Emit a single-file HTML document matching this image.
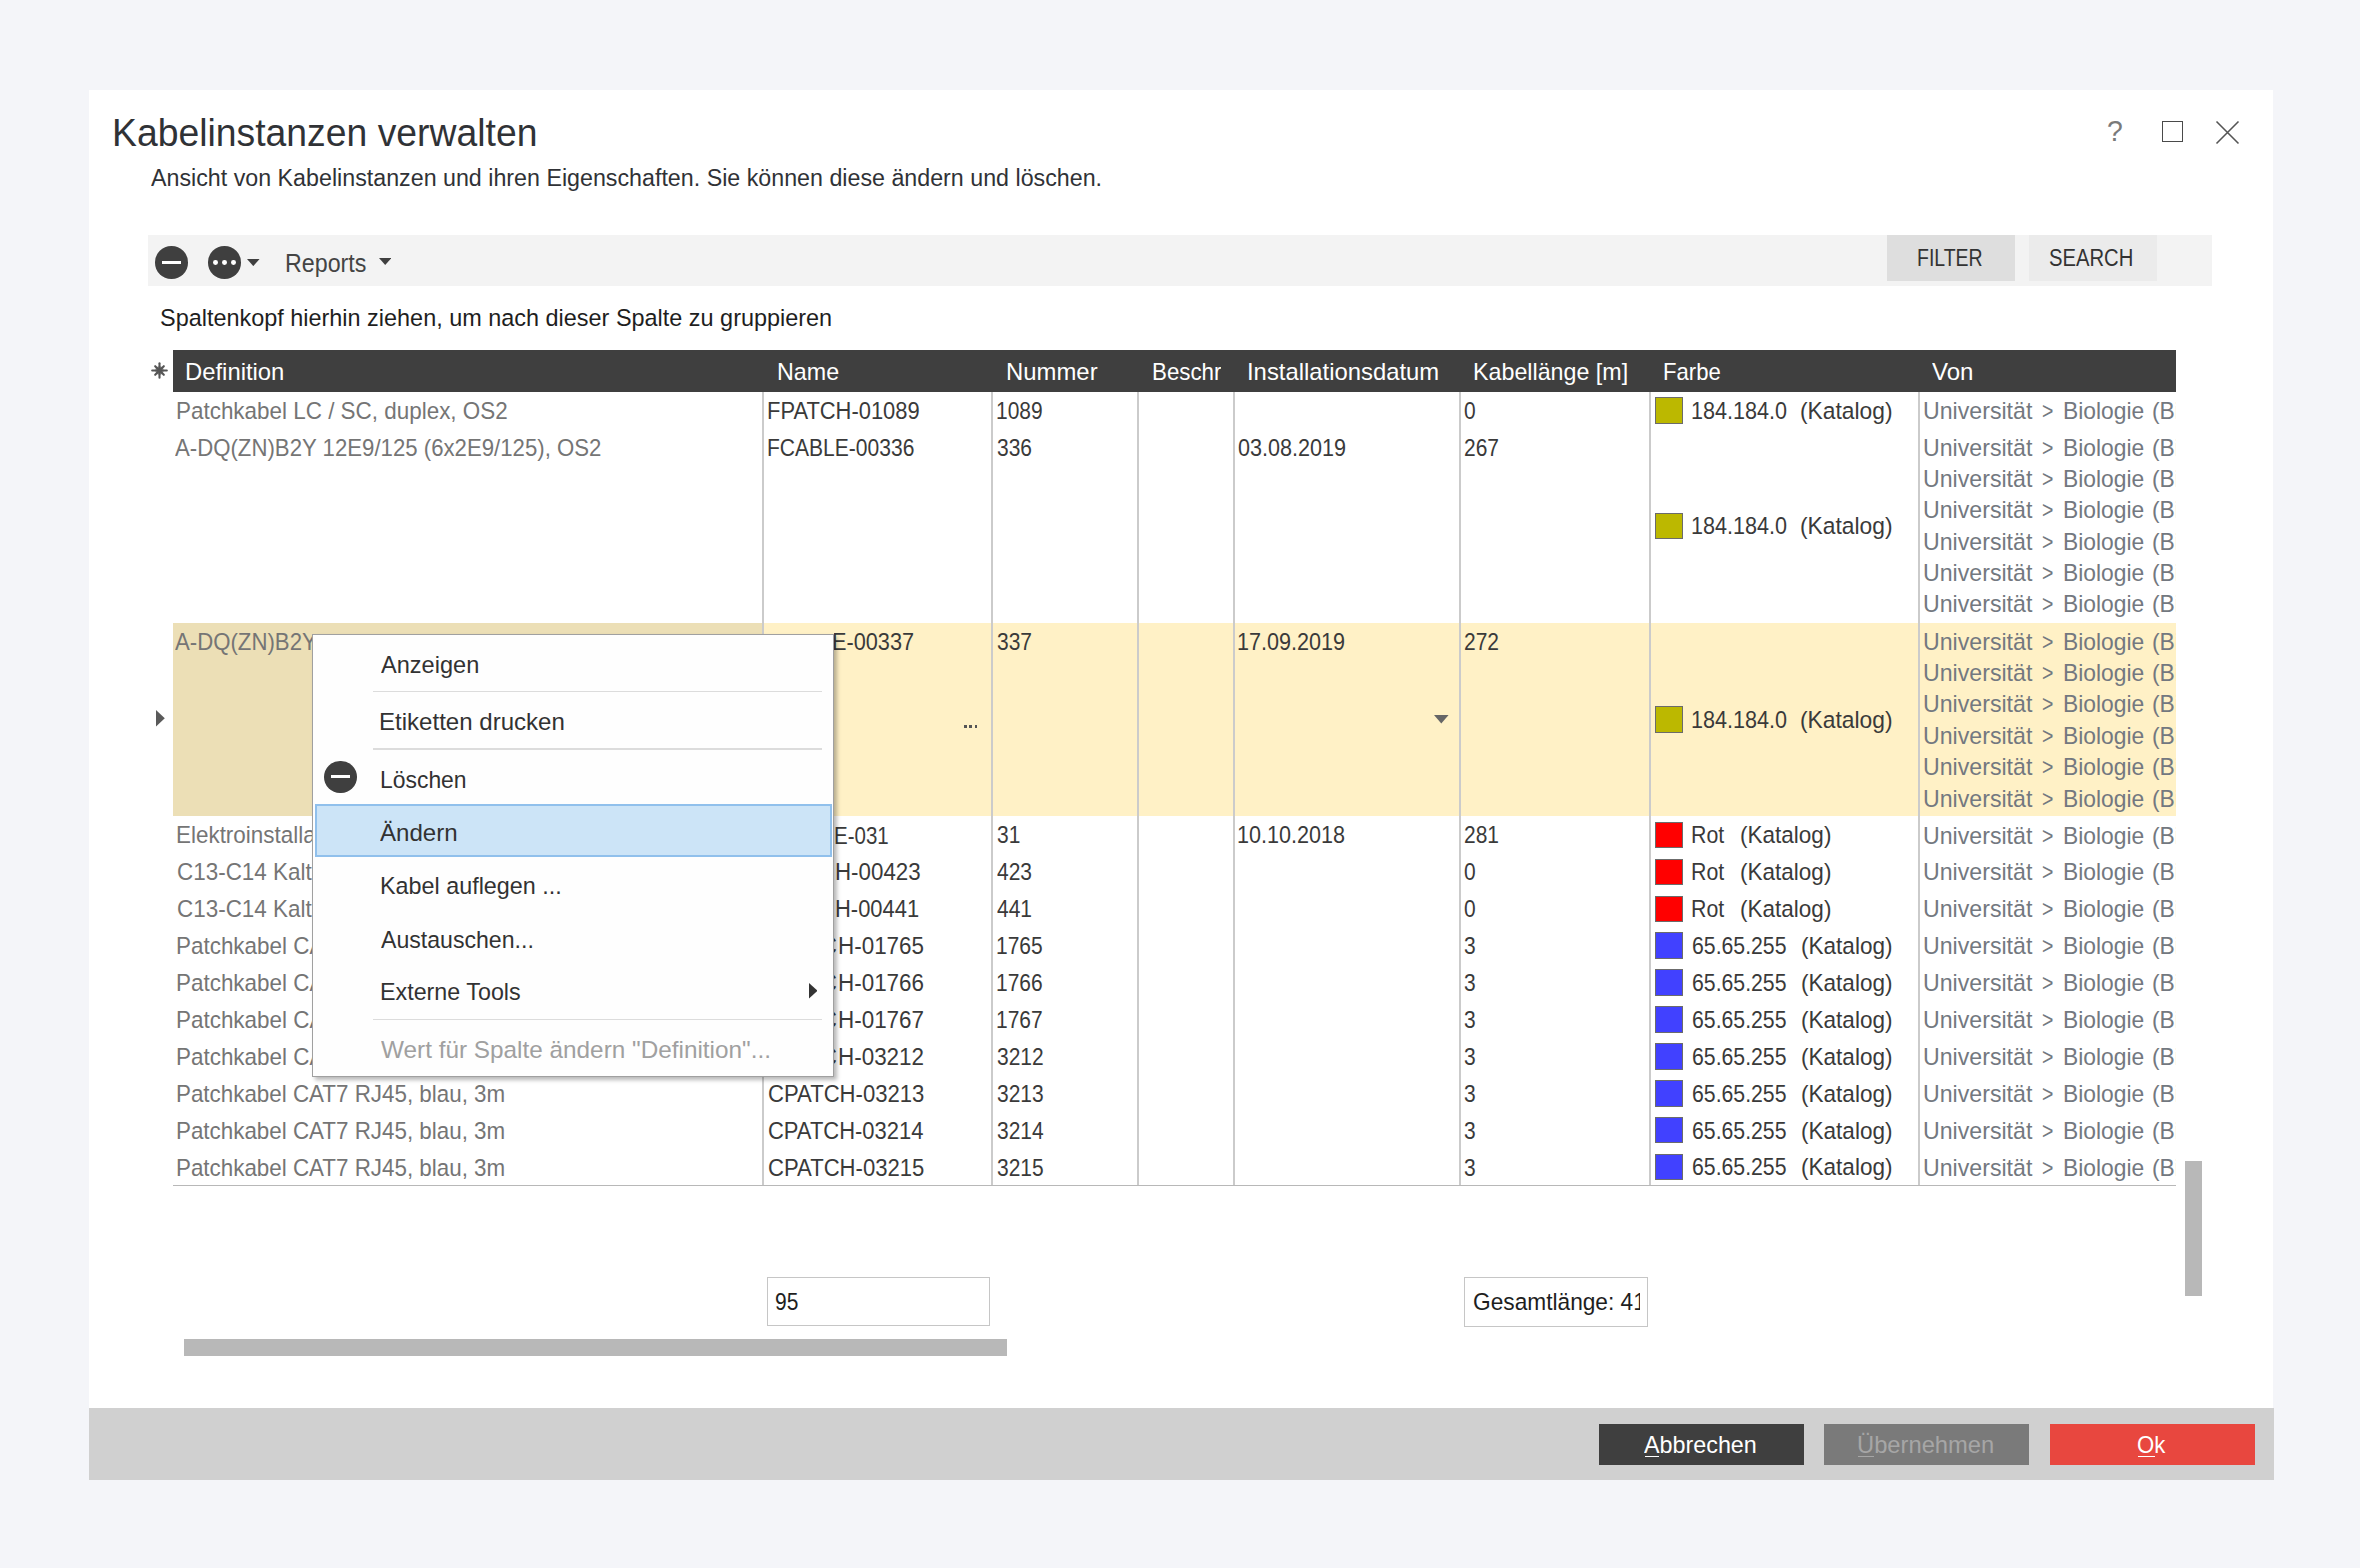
<!DOCTYPE html>
<html><head><meta charset="utf-8"><title>Kabelinstanzen verwalten</title>
<style>
html,body{margin:0;padding:0;}
body{width:2360px;height:1568px;background:#f4f5f9;position:relative;overflow:hidden;font-family:"Liberation Sans",sans-serif;}
.t{position:absolute;white-space:pre;line-height:1;transform-origin:0 0;}
.r{position:absolute;}
</style></head><body>
<div class="r" style="left:89px;top:90px;width:2184px;height:1318px;background:#ffffff;"></div>
<div class="r" style="left:89px;top:1407.5px;width:2184.5px;height:72px;background:#d0d0d0;"></div>
<div class="t" style="left:112.09px;top:113px;font-size:39.20px;color:#303236;transform:scaleX(0.9526);">Kabelinstanzen verwalten</div>
<div class="t" style="left:151.00px;top:166px;font-size:24.70px;color:#303236;transform:scaleX(0.9415);">Ansicht von Kabelinstanzen und ihren Eigenschaften. Sie können diese ändern und löschen.</div>
<div class="t" style="left:2107.02px;top:117px;font-size:29.00px;color:#7a7a7a;transform:scaleX(0.9800);">?</div>
<div class="r" style="left:2161.5px;top:120.5px;width:21px;height:21px;background:transparent;border:1.6px solid #4a4a4a;box-sizing:border-box;"></div>
<svg class="r" style="left:2214px;top:119px" width="28" height="28" viewBox="0 0 28 28"><path d="M2.5 2.5 L24.5 24.5 M24.5 2.5 L2.5 24.5" stroke="#555" stroke-width="1.6" fill="none"/></svg>
<div class="r" style="left:148px;top:235px;width:2064px;height:50.5px;background:#f3f3f3;"></div>
<div class="r" style="left:1887px;top:235px;width:128px;height:46px;background:#dedede;"></div>
<div class="r" style="left:2029px;top:235px;width:128px;height:46px;background:#ebebeb;"></div>
<div class="t" style="left:1917.19px;top:246px;font-size:24.10px;color:#333;transform:scaleX(0.8088);">FILTER</div>
<div class="t" style="left:2049.46px;top:246px;font-size:24.10px;color:#333;transform:scaleX(0.8394);">SEARCH</div>
<div class="r" style="left:155.2px;top:246.1px;width:32.6px;height:32.6px;border-radius:50%;background:#3f3f3f"></div>
<div class="r" style="left:162.2px;top:260.8px;width:18.5px;height:3.2px;background:#fff"></div>
<div class="r" style="left:208.2px;top:246.1px;width:32.6px;height:32.6px;border-radius:50%;background:#3f3f3f"></div>
<div class="r" style="left:213.0px;top:260.0px;width:4.8px;height:4.8px;border-radius:50%;background:#fff"></div>
<div class="r" style="left:222.1px;top:260.0px;width:4.8px;height:4.8px;border-radius:50%;background:#fff"></div>
<div class="r" style="left:231.0px;top:260.0px;width:4.8px;height:4.8px;border-radius:50%;background:#fff"></div>
<svg class="r" style="left:247.4px;top:259.4px" width="12.6" height="7.1" viewBox="0 0 12.6 7.1"><path d="M0 0 L12.6 0 L6.3 7.1 Z" fill="#3f3f3f"/></svg>
<div class="t" style="left:285.20px;top:251px;font-size:25.90px;color:#444;transform:scaleX(0.8978);">Reports</div>
<svg class="r" style="left:378.6px;top:258px" width="12.5" height="6.9" viewBox="0 0 12.5 6.9"><path d="M0 0 L12.5 0 L6.2 6.9 Z" fill="#3f3f3f"/></svg>
<div class="t" style="left:160.03px;top:306px;font-size:24.10px;color:#1e1e1e;transform:scaleX(0.9725);">Spaltenkopf hierhin ziehen, um nach dieser Spalte zu gruppieren</div>
<div class="r" style="left:173px;top:350px;width:2003.3000000000002px;height:42px;background:#3f3f3f;"></div>
<svg class="r" style="left:151px;top:362px" width="17" height="17" viewBox="0 0 17 17"><circle cx="8.5" cy="8.5" r="4.2" fill="#8f8f8f"/><g stroke="#555" stroke-width="2.1" stroke-linecap="round"><path d="M8.5 1.2 V15.8"/><path d="M1.2 8.5 H15.8"/><path d="M4.2 4.2 L12.8 12.8"/><path d="M12.8 4.2 L4.2 12.8"/></g></svg>
<div class="t" style="left:185.21px;top:360px;font-size:24.00px;color:#ffffff;transform:scaleX(0.9929);">Definition</div>
<div class="t" style="left:776.53px;top:360px;font-size:24.00px;color:#ffffff;transform:scaleX(0.9698);">Name</div>
<div class="t" style="left:1005.80px;top:360px;font-size:24.00px;color:#ffffff;transform:scaleX(0.9956);">Nummer</div>
<div class="r" style="left:1140px;top:350px;width:80.5px;height:42px;overflow:hidden">
<div class="t" style="left:12.27px;top:10px;font-size:24.00px;color:#ffffff;transform:scaleX(0.9300);">Beschreibung</div>
</div>
<div class="t" style="left:1246.81px;top:360px;font-size:24.00px;color:#ffffff;transform:scaleX(0.9932);">Installationsdatum</div>
<div class="t" style="left:1473.23px;top:360px;font-size:24.00px;color:#ffffff;transform:scaleX(0.9692);">Kabellänge [m]</div>
<div class="t" style="left:1662.78px;top:360px;font-size:24.00px;color:#ffffff;transform:scaleX(0.9213);">Farbe</div>
<div class="t" style="left:1932.40px;top:360px;font-size:24.00px;color:#ffffff;transform:scaleX(1.0024);">Von</div>
<div class="r" style="left:173px;top:622.9px;width:2003.3000000000002px;height:193.6px;background:#fff1c6;"></div>
<div class="r" style="left:173px;top:622.9px;width:590px;height:193.6px;background:#ecdfb6;"></div>
<div class="r" style="left:762px;top:392px;width:1.6px;height:793.5000000000002px;background:#cbcbcb;"></div>
<div class="r" style="left:991px;top:392px;width:1.6px;height:793.5000000000002px;background:#cbcbcb;"></div>
<div class="r" style="left:1137px;top:392px;width:1.6px;height:793.5000000000002px;background:#cbcbcb;"></div>
<div class="r" style="left:1233px;top:392px;width:1.6px;height:793.5000000000002px;background:#cbcbcb;"></div>
<div class="r" style="left:1459px;top:392px;width:1.6px;height:793.5000000000002px;background:#cbcbcb;"></div>
<div class="r" style="left:1649px;top:392px;width:1.6px;height:793.5000000000002px;background:#cbcbcb;"></div>
<div class="r" style="left:1918px;top:392px;width:1.6px;height:793.5000000000002px;background:#cbcbcb;"></div>
<div class="r" style="left:173px;top:1185.0000000000002px;width:2003.3000000000002px;height:1.4px;background:#b8b8b8;"></div>
<div class="t" style="left:176.34px;top:400px;font-size:23.25px;color:#757575;transform:scaleX(0.9649);">Patchkabel LC / SC, duplex, OS2</div>
<div class="t" style="left:766.86px;top:400px;font-size:23.25px;color:#3a3a3a;transform:scaleX(0.9429);">FPATCH-01089</div>
<div class="t" style="left:995.90px;top:400px;font-size:23.25px;color:#3a3a3a;transform:scaleX(0.9020);">1089</div>
<div class="t" style="left:1464.40px;top:400px;font-size:23.25px;color:#3a3a3a;transform:scaleX(0.9020);">0</div>
<div class="r" style="left:1655px;top:397.3px;width:28.3px;height:26.6px;background:#bcb800;border:1.4px solid #6b6b6b;box-sizing:border-box;"></div>
<div class="t" style="left:1691.07px;top:400px;font-size:23.25px;color:#3a3a3a;transform:scaleX(0.9284);">184.184.0</div>
<div class="t" style="left:1800.42px;top:400px;font-size:23.25px;color:#3a3a3a;transform:scaleX(0.9817);">(Katalog)</div>
<div class="r" style="left:1920px;top:392.0px;width:255.5px;height:37.3px;overflow:hidden">
<div class="t" style="left:3.00px;top:8px;font-size:23.25px;color:#737880;transform:scaleX(0.9954);">Universität</div>
<div class="t" style="left:122.00px;top:8px;font-size:23.25px;color:#737880;transform:scaleX(0.8385);">&gt;</div>
<div class="t" style="left:143.42px;top:8px;font-size:23.25px;color:#737880;transform:scaleX(0.9829);">Biologie</div>
<div class="t" style="left:232.22px;top:8px;font-size:23.25px;color:#737880;transform:scaleX(0.9817);">(Bio-Zentrum)</div>
</div>
<div class="t" style="left:175.30px;top:437px;font-size:23.25px;color:#757575;transform:scaleX(0.9545);">A-DQ(ZN)B2Y 12E9/125 (6x2E9/125), OS2</div>
<div class="t" style="left:766.90px;top:437px;font-size:23.25px;color:#3a3a3a;transform:scaleX(0.9049);">FCABLE-00336</div>
<div class="t" style="left:996.80px;top:437px;font-size:23.25px;color:#3a3a3a;transform:scaleX(0.9020);">336</div>
<div class="t" style="left:1237.80px;top:437px;font-size:23.25px;color:#3a3a3a;transform:scaleX(0.9284);">03.08.2019</div>
<div class="t" style="left:1464.40px;top:437px;font-size:23.25px;color:#3a3a3a;transform:scaleX(0.9020);">267</div>
<div class="r" style="left:1655px;top:512.8px;width:28.3px;height:26.6px;background:#bcb800;border:1.4px solid #6b6b6b;box-sizing:border-box;"></div>
<div class="t" style="left:1691.07px;top:515px;font-size:23.25px;color:#3a3a3a;transform:scaleX(0.9284);">184.184.0</div>
<div class="t" style="left:1800.42px;top:515px;font-size:23.25px;color:#3a3a3a;transform:scaleX(0.9817);">(Katalog)</div>
<div class="r" style="left:1920px;top:429.3px;width:255.5px;height:193.6px;overflow:hidden">
<div class="t" style="left:3.00px;top:8px;font-size:23.25px;color:#737880;transform:scaleX(0.9954);">Universität</div>
<div class="t" style="left:122.00px;top:8px;font-size:23.25px;color:#737880;transform:scaleX(0.8385);">&gt;</div>
<div class="t" style="left:143.42px;top:8px;font-size:23.25px;color:#737880;transform:scaleX(0.9829);">Biologie</div>
<div class="t" style="left:232.22px;top:8px;font-size:23.25px;color:#737880;transform:scaleX(0.9817);">(Bio-Zentrum)</div>
<div class="t" style="left:3.00px;top:39px;font-size:23.25px;color:#737880;transform:scaleX(0.9954);">Universität</div>
<div class="t" style="left:122.00px;top:39px;font-size:23.25px;color:#737880;transform:scaleX(0.8385);">&gt;</div>
<div class="t" style="left:143.42px;top:39px;font-size:23.25px;color:#737880;transform:scaleX(0.9829);">Biologie</div>
<div class="t" style="left:232.22px;top:39px;font-size:23.25px;color:#737880;transform:scaleX(0.9817);">(Bio-Zentrum)</div>
<div class="t" style="left:3.00px;top:70px;font-size:23.25px;color:#737880;transform:scaleX(0.9954);">Universität</div>
<div class="t" style="left:122.00px;top:70px;font-size:23.25px;color:#737880;transform:scaleX(0.8385);">&gt;</div>
<div class="t" style="left:143.42px;top:70px;font-size:23.25px;color:#737880;transform:scaleX(0.9829);">Biologie</div>
<div class="t" style="left:232.22px;top:70px;font-size:23.25px;color:#737880;transform:scaleX(0.9817);">(Bio-Zentrum)</div>
<div class="t" style="left:3.00px;top:102px;font-size:23.25px;color:#737880;transform:scaleX(0.9954);">Universität</div>
<div class="t" style="left:122.00px;top:102px;font-size:23.25px;color:#737880;transform:scaleX(0.8385);">&gt;</div>
<div class="t" style="left:143.42px;top:102px;font-size:23.25px;color:#737880;transform:scaleX(0.9829);">Biologie</div>
<div class="t" style="left:232.22px;top:102px;font-size:23.25px;color:#737880;transform:scaleX(0.9817);">(Bio-Zentrum)</div>
<div class="t" style="left:3.00px;top:133px;font-size:23.25px;color:#737880;transform:scaleX(0.9954);">Universität</div>
<div class="t" style="left:122.00px;top:133px;font-size:23.25px;color:#737880;transform:scaleX(0.8385);">&gt;</div>
<div class="t" style="left:143.42px;top:133px;font-size:23.25px;color:#737880;transform:scaleX(0.9829);">Biologie</div>
<div class="t" style="left:232.22px;top:133px;font-size:23.25px;color:#737880;transform:scaleX(0.9817);">(Bio-Zentrum)</div>
<div class="t" style="left:3.00px;top:164px;font-size:23.25px;color:#737880;transform:scaleX(0.9954);">Universität</div>
<div class="t" style="left:122.00px;top:164px;font-size:23.25px;color:#737880;transform:scaleX(0.8385);">&gt;</div>
<div class="t" style="left:143.42px;top:164px;font-size:23.25px;color:#737880;transform:scaleX(0.9829);">Biologie</div>
<div class="t" style="left:232.22px;top:164px;font-size:23.25px;color:#737880;transform:scaleX(0.9817);">(Bio-Zentrum)</div>
</div>
<div class="r" style="left:173px;top:622.9px;width:139px;height:193.6px;overflow:hidden">
<div class="t" style="left:2.30px;top:8px;font-size:23.25px;color:#757575;transform:scaleX(0.9545);">A-DQ(ZN)B2Y 12E9/125 (6x2E9/125), OS2</div>
</div>
<div class="r" style="left:834px;top:622.9px;width:156px;height:193.6px;overflow:hidden">
<div class="t" style="left:-2.13px;top:8px;font-size:23.25px;color:#3a3a3a;transform:scaleX(0.9333);">E-00337</div>
</div>
<div class="t" style="left:996.80px;top:631px;font-size:23.25px;color:#3a3a3a;transform:scaleX(0.9020);">337</div>
<div class="t" style="left:1236.87px;top:631px;font-size:23.25px;color:#3a3a3a;transform:scaleX(0.9284);">17.09.2019</div>
<div class="t" style="left:1464.40px;top:631px;font-size:23.25px;color:#3a3a3a;transform:scaleX(0.9020);">272</div>
<div class="r" style="left:1655px;top:706.4px;width:28.3px;height:26.6px;background:#bcb800;border:1.4px solid #6b6b6b;box-sizing:border-box;"></div>
<div class="t" style="left:1691.07px;top:709px;font-size:23.25px;color:#3a3a3a;transform:scaleX(0.9284);">184.184.0</div>
<div class="t" style="left:1800.42px;top:709px;font-size:23.25px;color:#3a3a3a;transform:scaleX(0.9817);">(Katalog)</div>
<div class="r" style="left:1920px;top:622.9px;width:255.5px;height:193.6px;overflow:hidden">
<div class="t" style="left:3.00px;top:8px;font-size:23.25px;color:#737880;transform:scaleX(0.9954);">Universität</div>
<div class="t" style="left:122.00px;top:8px;font-size:23.25px;color:#737880;transform:scaleX(0.8385);">&gt;</div>
<div class="t" style="left:143.42px;top:8px;font-size:23.25px;color:#737880;transform:scaleX(0.9829);">Biologie</div>
<div class="t" style="left:232.22px;top:8px;font-size:23.25px;color:#737880;transform:scaleX(0.9817);">(Bio-Zentrum)</div>
<div class="t" style="left:3.00px;top:39px;font-size:23.25px;color:#737880;transform:scaleX(0.9954);">Universität</div>
<div class="t" style="left:122.00px;top:39px;font-size:23.25px;color:#737880;transform:scaleX(0.8385);">&gt;</div>
<div class="t" style="left:143.42px;top:39px;font-size:23.25px;color:#737880;transform:scaleX(0.9829);">Biologie</div>
<div class="t" style="left:232.22px;top:39px;font-size:23.25px;color:#737880;transform:scaleX(0.9817);">(Bio-Zentrum)</div>
<div class="t" style="left:3.00px;top:70px;font-size:23.25px;color:#737880;transform:scaleX(0.9954);">Universität</div>
<div class="t" style="left:122.00px;top:70px;font-size:23.25px;color:#737880;transform:scaleX(0.8385);">&gt;</div>
<div class="t" style="left:143.42px;top:70px;font-size:23.25px;color:#737880;transform:scaleX(0.9829);">Biologie</div>
<div class="t" style="left:232.22px;top:70px;font-size:23.25px;color:#737880;transform:scaleX(0.9817);">(Bio-Zentrum)</div>
<div class="t" style="left:3.00px;top:102px;font-size:23.25px;color:#737880;transform:scaleX(0.9954);">Universität</div>
<div class="t" style="left:122.00px;top:102px;font-size:23.25px;color:#737880;transform:scaleX(0.8385);">&gt;</div>
<div class="t" style="left:143.42px;top:102px;font-size:23.25px;color:#737880;transform:scaleX(0.9829);">Biologie</div>
<div class="t" style="left:232.22px;top:102px;font-size:23.25px;color:#737880;transform:scaleX(0.9817);">(Bio-Zentrum)</div>
<div class="t" style="left:3.00px;top:133px;font-size:23.25px;color:#737880;transform:scaleX(0.9954);">Universität</div>
<div class="t" style="left:122.00px;top:133px;font-size:23.25px;color:#737880;transform:scaleX(0.8385);">&gt;</div>
<div class="t" style="left:143.42px;top:133px;font-size:23.25px;color:#737880;transform:scaleX(0.9829);">Biologie</div>
<div class="t" style="left:232.22px;top:133px;font-size:23.25px;color:#737880;transform:scaleX(0.9817);">(Bio-Zentrum)</div>
<div class="t" style="left:3.00px;top:165px;font-size:23.25px;color:#737880;transform:scaleX(0.9954);">Universität</div>
<div class="t" style="left:122.00px;top:165px;font-size:23.25px;color:#737880;transform:scaleX(0.8385);">&gt;</div>
<div class="t" style="left:143.42px;top:165px;font-size:23.25px;color:#737880;transform:scaleX(0.9829);">Biologie</div>
<div class="t" style="left:232.22px;top:165px;font-size:23.25px;color:#737880;transform:scaleX(0.9817);">(Bio-Zentrum)</div>
</div>
<div class="t" style="left:176.34px;top:824px;font-size:23.25px;color:#757575;transform:scaleX(0.9649);">Elektroinstallationskabel NYM-J 3x1,5</div>
<div class="r" style="left:834px;top:816.5px;width:156px;height:36.9px;overflow:hidden">
<div class="t" style="left:0.32px;top:8px;font-size:23.25px;color:#3a3a3a;transform:scaleX(0.8820);">E-031</div>
</div>
<div class="t" style="left:996.80px;top:824px;font-size:23.25px;color:#3a3a3a;transform:scaleX(0.9020);">31</div>
<div class="t" style="left:1236.87px;top:824px;font-size:23.25px;color:#3a3a3a;transform:scaleX(0.9284);">10.10.2018</div>
<div class="t" style="left:1464.40px;top:824px;font-size:23.25px;color:#3a3a3a;transform:scaleX(0.9020);">281</div>
<div class="r" style="left:1655px;top:821.7px;width:28.3px;height:26.6px;background:#ff0000;border:1.4px solid #6b6b6b;box-sizing:border-box;"></div>
<div class="t" style="left:1691.08px;top:824px;font-size:23.25px;color:#3a3a3a;transform:scaleX(0.9167);">Rot</div>
<div class="t" style="left:1739.73px;top:824px;font-size:23.25px;color:#3a3a3a;transform:scaleX(0.9688);">(Katalog)</div>
<div class="r" style="left:1920px;top:816.5px;width:255.5px;height:36.9px;overflow:hidden">
<div class="t" style="left:3.00px;top:8px;font-size:23.25px;color:#737880;transform:scaleX(0.9954);">Universität</div>
<div class="t" style="left:122.00px;top:8px;font-size:23.25px;color:#737880;transform:scaleX(0.8385);">&gt;</div>
<div class="t" style="left:143.42px;top:8px;font-size:23.25px;color:#737880;transform:scaleX(0.9829);">Biologie</div>
<div class="t" style="left:232.22px;top:8px;font-size:23.25px;color:#737880;transform:scaleX(0.9817);">(Bio-Zentrum)</div>
</div>
<div class="t" style="left:177.30px;top:861px;font-size:23.25px;color:#757575;transform:scaleX(0.9649);">C13-C14 Kaltgeräte Netzkabel, 2m</div>
<div class="r" style="left:834px;top:853.4px;width:156px;height:36.9px;overflow:hidden">
<div class="t" style="left:1.34px;top:8px;font-size:23.25px;color:#3a3a3a;transform:scaleX(0.9602);">H-00423</div>
</div>
<div class="t" style="left:996.80px;top:861px;font-size:23.25px;color:#3a3a3a;transform:scaleX(0.9020);">423</div>
<div class="t" style="left:1464.40px;top:861px;font-size:23.25px;color:#3a3a3a;transform:scaleX(0.9020);">0</div>
<div class="r" style="left:1655px;top:858.6px;width:28.3px;height:26.6px;background:#ff0000;border:1.4px solid #6b6b6b;box-sizing:border-box;"></div>
<div class="t" style="left:1691.08px;top:861px;font-size:23.25px;color:#3a3a3a;transform:scaleX(0.9167);">Rot</div>
<div class="t" style="left:1739.73px;top:861px;font-size:23.25px;color:#3a3a3a;transform:scaleX(0.9688);">(Katalog)</div>
<div class="r" style="left:1920px;top:853.4px;width:255.5px;height:36.9px;overflow:hidden">
<div class="t" style="left:3.00px;top:8px;font-size:23.25px;color:#737880;transform:scaleX(0.9954);">Universität</div>
<div class="t" style="left:122.00px;top:8px;font-size:23.25px;color:#737880;transform:scaleX(0.8385);">&gt;</div>
<div class="t" style="left:143.42px;top:8px;font-size:23.25px;color:#737880;transform:scaleX(0.9829);">Biologie</div>
<div class="t" style="left:232.22px;top:8px;font-size:23.25px;color:#737880;transform:scaleX(0.9817);">(Bio-Zentrum)</div>
</div>
<div class="t" style="left:177.30px;top:898px;font-size:23.25px;color:#757575;transform:scaleX(0.9649);">C13-C14 Kaltgeräte Netzkabel, 2m</div>
<div class="r" style="left:834px;top:890.3px;width:156px;height:36.9px;overflow:hidden">
<div class="t" style="left:1.36px;top:8px;font-size:23.25px;color:#3a3a3a;transform:scaleX(0.9432);">H-00441</div>
</div>
<div class="t" style="left:996.80px;top:898px;font-size:23.25px;color:#3a3a3a;transform:scaleX(0.9020);">441</div>
<div class="t" style="left:1464.40px;top:898px;font-size:23.25px;color:#3a3a3a;transform:scaleX(0.9020);">0</div>
<div class="r" style="left:1655px;top:895.5px;width:28.3px;height:26.6px;background:#ff0000;border:1.4px solid #6b6b6b;box-sizing:border-box;"></div>
<div class="t" style="left:1691.08px;top:898px;font-size:23.25px;color:#3a3a3a;transform:scaleX(0.9167);">Rot</div>
<div class="t" style="left:1739.73px;top:898px;font-size:23.25px;color:#3a3a3a;transform:scaleX(0.9688);">(Katalog)</div>
<div class="r" style="left:1920px;top:890.3px;width:255.5px;height:36.9px;overflow:hidden">
<div class="t" style="left:3.00px;top:8px;font-size:23.25px;color:#737880;transform:scaleX(0.9954);">Universität</div>
<div class="t" style="left:122.00px;top:8px;font-size:23.25px;color:#737880;transform:scaleX(0.8385);">&gt;</div>
<div class="t" style="left:143.42px;top:8px;font-size:23.25px;color:#737880;transform:scaleX(0.9829);">Biologie</div>
<div class="t" style="left:232.22px;top:8px;font-size:23.25px;color:#737880;transform:scaleX(0.9817);">(Bio-Zentrum)</div>
</div>
<div class="t" style="left:176.34px;top:935px;font-size:23.25px;color:#757575;transform:scaleX(0.9649);">Patchkabel CAT7 RJ45, blau, 3m</div>
<div class="r" style="left:834px;top:927.2px;width:156px;height:36.9px;overflow:hidden">
<div class="t" style="left:3.74px;top:8px;font-size:23.25px;color:#3a3a3a;transform:scaleX(0.9648);">H-01765</div>
<div class="t" style="left:-12.75px;top:8px;font-size:23.25px;color:#3a3a3a;transform:scaleX(0.9441);">C</div>
</div>
<div class="t" style="left:995.90px;top:935px;font-size:23.25px;color:#3a3a3a;transform:scaleX(0.9020);">1765</div>
<div class="t" style="left:1464.40px;top:935px;font-size:23.25px;color:#3a3a3a;transform:scaleX(0.9020);">3</div>
<div class="r" style="left:1655px;top:932.4px;width:28.3px;height:26.6px;background:#4141ff;border:1.4px solid #6b6b6b;box-sizing:border-box;"></div>
<div class="t" style="left:1692.00px;top:935px;font-size:23.25px;color:#3a3a3a;transform:scaleX(0.9136);">65.65.255</div>
<div class="t" style="left:1800.73px;top:935px;font-size:23.25px;color:#3a3a3a;transform:scaleX(0.9699);">(Katalog)</div>
<div class="r" style="left:1920px;top:927.2px;width:255.5px;height:36.9px;overflow:hidden">
<div class="t" style="left:3.00px;top:8px;font-size:23.25px;color:#737880;transform:scaleX(0.9954);">Universität</div>
<div class="t" style="left:122.00px;top:8px;font-size:23.25px;color:#737880;transform:scaleX(0.8385);">&gt;</div>
<div class="t" style="left:143.42px;top:8px;font-size:23.25px;color:#737880;transform:scaleX(0.9829);">Biologie</div>
<div class="t" style="left:232.22px;top:8px;font-size:23.25px;color:#737880;transform:scaleX(0.9817);">(Bio-Zentrum)</div>
</div>
<div class="t" style="left:176.34px;top:972px;font-size:23.25px;color:#757575;transform:scaleX(0.9649);">Patchkabel CAT7 RJ45, blau, 3m</div>
<div class="r" style="left:834px;top:964.1px;width:156px;height:36.9px;overflow:hidden">
<div class="t" style="left:3.74px;top:8px;font-size:23.25px;color:#3a3a3a;transform:scaleX(0.9648);">H-01766</div>
<div class="t" style="left:-12.75px;top:8px;font-size:23.25px;color:#3a3a3a;transform:scaleX(0.9441);">C</div>
</div>
<div class="t" style="left:995.90px;top:972px;font-size:23.25px;color:#3a3a3a;transform:scaleX(0.9020);">1766</div>
<div class="t" style="left:1464.40px;top:972px;font-size:23.25px;color:#3a3a3a;transform:scaleX(0.9020);">3</div>
<div class="r" style="left:1655px;top:969.2px;width:28.3px;height:26.6px;background:#4141ff;border:1.4px solid #6b6b6b;box-sizing:border-box;"></div>
<div class="t" style="left:1692.00px;top:972px;font-size:23.25px;color:#3a3a3a;transform:scaleX(0.9136);">65.65.255</div>
<div class="t" style="left:1800.73px;top:972px;font-size:23.25px;color:#3a3a3a;transform:scaleX(0.9699);">(Katalog)</div>
<div class="r" style="left:1920px;top:964.1px;width:255.5px;height:36.9px;overflow:hidden">
<div class="t" style="left:3.00px;top:8px;font-size:23.25px;color:#737880;transform:scaleX(0.9954);">Universität</div>
<div class="t" style="left:122.00px;top:8px;font-size:23.25px;color:#737880;transform:scaleX(0.8385);">&gt;</div>
<div class="t" style="left:143.42px;top:8px;font-size:23.25px;color:#737880;transform:scaleX(0.9829);">Biologie</div>
<div class="t" style="left:232.22px;top:8px;font-size:23.25px;color:#737880;transform:scaleX(0.9817);">(Bio-Zentrum)</div>
</div>
<div class="t" style="left:176.34px;top:1009px;font-size:23.25px;color:#757575;transform:scaleX(0.9649);">Patchkabel CAT7 RJ45, blau, 3m</div>
<div class="r" style="left:834px;top:1001.0px;width:156px;height:36.9px;overflow:hidden">
<div class="t" style="left:3.74px;top:8px;font-size:23.25px;color:#3a3a3a;transform:scaleX(0.9648);">H-01767</div>
<div class="t" style="left:-12.75px;top:8px;font-size:23.25px;color:#3a3a3a;transform:scaleX(0.9441);">C</div>
</div>
<div class="t" style="left:995.90px;top:1009px;font-size:23.25px;color:#3a3a3a;transform:scaleX(0.9020);">1767</div>
<div class="t" style="left:1464.40px;top:1009px;font-size:23.25px;color:#3a3a3a;transform:scaleX(0.9020);">3</div>
<div class="r" style="left:1655px;top:1006.1px;width:28.3px;height:26.6px;background:#4141ff;border:1.4px solid #6b6b6b;box-sizing:border-box;"></div>
<div class="t" style="left:1692.00px;top:1009px;font-size:23.25px;color:#3a3a3a;transform:scaleX(0.9136);">65.65.255</div>
<div class="t" style="left:1800.73px;top:1009px;font-size:23.25px;color:#3a3a3a;transform:scaleX(0.9699);">(Katalog)</div>
<div class="r" style="left:1920px;top:1001.0px;width:255.5px;height:36.9px;overflow:hidden">
<div class="t" style="left:3.00px;top:8px;font-size:23.25px;color:#737880;transform:scaleX(0.9954);">Universität</div>
<div class="t" style="left:122.00px;top:8px;font-size:23.25px;color:#737880;transform:scaleX(0.8385);">&gt;</div>
<div class="t" style="left:143.42px;top:8px;font-size:23.25px;color:#737880;transform:scaleX(0.9829);">Biologie</div>
<div class="t" style="left:232.22px;top:8px;font-size:23.25px;color:#737880;transform:scaleX(0.9817);">(Bio-Zentrum)</div>
</div>
<div class="t" style="left:176.34px;top:1046px;font-size:23.25px;color:#757575;transform:scaleX(0.9649);">Patchkabel CAT7 RJ45, blau, 3m</div>
<div class="r" style="left:834px;top:1037.9px;width:156px;height:36.9px;overflow:hidden">
<div class="t" style="left:3.74px;top:8px;font-size:23.25px;color:#3a3a3a;transform:scaleX(0.9648);">H-03212</div>
<div class="t" style="left:-12.75px;top:8px;font-size:23.25px;color:#3a3a3a;transform:scaleX(0.9441);">C</div>
</div>
<div class="t" style="left:996.80px;top:1046px;font-size:23.25px;color:#3a3a3a;transform:scaleX(0.9020);">3212</div>
<div class="t" style="left:1464.40px;top:1046px;font-size:23.25px;color:#3a3a3a;transform:scaleX(0.9020);">3</div>
<div class="r" style="left:1655px;top:1043.0px;width:28.3px;height:26.6px;background:#4141ff;border:1.4px solid #6b6b6b;box-sizing:border-box;"></div>
<div class="t" style="left:1692.00px;top:1046px;font-size:23.25px;color:#3a3a3a;transform:scaleX(0.9136);">65.65.255</div>
<div class="t" style="left:1800.73px;top:1046px;font-size:23.25px;color:#3a3a3a;transform:scaleX(0.9699);">(Katalog)</div>
<div class="r" style="left:1920px;top:1037.9px;width:255.5px;height:36.9px;overflow:hidden">
<div class="t" style="left:3.00px;top:8px;font-size:23.25px;color:#737880;transform:scaleX(0.9954);">Universität</div>
<div class="t" style="left:122.00px;top:8px;font-size:23.25px;color:#737880;transform:scaleX(0.8385);">&gt;</div>
<div class="t" style="left:143.42px;top:8px;font-size:23.25px;color:#737880;transform:scaleX(0.9829);">Biologie</div>
<div class="t" style="left:232.22px;top:8px;font-size:23.25px;color:#737880;transform:scaleX(0.9817);">(Bio-Zentrum)</div>
</div>
<div class="t" style="left:176.34px;top:1083px;font-size:23.25px;color:#757575;transform:scaleX(0.9625);">Patchkabel CAT7 RJ45, blau, 3m</div>
<div class="t" style="left:767.80px;top:1083px;font-size:23.25px;color:#3a3a3a;transform:scaleX(0.9500);">CPATCH-03213</div>
<div class="t" style="left:996.80px;top:1083px;font-size:23.25px;color:#3a3a3a;transform:scaleX(0.9020);">3213</div>
<div class="t" style="left:1464.40px;top:1083px;font-size:23.25px;color:#3a3a3a;transform:scaleX(0.9020);">3</div>
<div class="r" style="left:1655px;top:1080.0px;width:28.3px;height:26.6px;background:#4141ff;border:1.4px solid #6b6b6b;box-sizing:border-box;"></div>
<div class="t" style="left:1692.00px;top:1083px;font-size:23.25px;color:#3a3a3a;transform:scaleX(0.9136);">65.65.255</div>
<div class="t" style="left:1800.73px;top:1083px;font-size:23.25px;color:#3a3a3a;transform:scaleX(0.9699);">(Katalog)</div>
<div class="r" style="left:1920px;top:1074.8px;width:255.5px;height:36.9px;overflow:hidden">
<div class="t" style="left:3.00px;top:8px;font-size:23.25px;color:#737880;transform:scaleX(0.9954);">Universität</div>
<div class="t" style="left:122.00px;top:8px;font-size:23.25px;color:#737880;transform:scaleX(0.8385);">&gt;</div>
<div class="t" style="left:143.42px;top:8px;font-size:23.25px;color:#737880;transform:scaleX(0.9829);">Biologie</div>
<div class="t" style="left:232.22px;top:8px;font-size:23.25px;color:#737880;transform:scaleX(0.9817);">(Bio-Zentrum)</div>
</div>
<div class="t" style="left:176.34px;top:1120px;font-size:23.25px;color:#757575;transform:scaleX(0.9625);">Patchkabel CAT7 RJ45, blau, 3m</div>
<div class="t" style="left:767.80px;top:1120px;font-size:23.25px;color:#3a3a3a;transform:scaleX(0.9442);">CPATCH-03214</div>
<div class="t" style="left:996.80px;top:1120px;font-size:23.25px;color:#3a3a3a;transform:scaleX(0.9020);">3214</div>
<div class="t" style="left:1464.40px;top:1120px;font-size:23.25px;color:#3a3a3a;transform:scaleX(0.9020);">3</div>
<div class="r" style="left:1655px;top:1116.9px;width:28.3px;height:26.6px;background:#4141ff;border:1.4px solid #6b6b6b;box-sizing:border-box;"></div>
<div class="t" style="left:1692.00px;top:1120px;font-size:23.25px;color:#3a3a3a;transform:scaleX(0.9136);">65.65.255</div>
<div class="t" style="left:1800.73px;top:1120px;font-size:23.25px;color:#3a3a3a;transform:scaleX(0.9699);">(Katalog)</div>
<div class="r" style="left:1920px;top:1111.7px;width:255.5px;height:36.9px;overflow:hidden">
<div class="t" style="left:3.00px;top:8px;font-size:23.25px;color:#737880;transform:scaleX(0.9954);">Universität</div>
<div class="t" style="left:122.00px;top:8px;font-size:23.25px;color:#737880;transform:scaleX(0.8385);">&gt;</div>
<div class="t" style="left:143.42px;top:8px;font-size:23.25px;color:#737880;transform:scaleX(0.9829);">Biologie</div>
<div class="t" style="left:232.22px;top:8px;font-size:23.25px;color:#737880;transform:scaleX(0.9817);">(Bio-Zentrum)</div>
</div>
<div class="t" style="left:176.34px;top:1157px;font-size:23.25px;color:#757575;transform:scaleX(0.9625);">Patchkabel CAT7 RJ45, blau, 3m</div>
<div class="t" style="left:767.80px;top:1157px;font-size:23.25px;color:#3a3a3a;transform:scaleX(0.9500);">CPATCH-03215</div>
<div class="t" style="left:996.80px;top:1157px;font-size:23.25px;color:#3a3a3a;transform:scaleX(0.9020);">3215</div>
<div class="t" style="left:1464.40px;top:1157px;font-size:23.25px;color:#3a3a3a;transform:scaleX(0.9020);">3</div>
<div class="r" style="left:1655px;top:1153.8px;width:28.3px;height:26.6px;background:#4141ff;border:1.4px solid #6b6b6b;box-sizing:border-box;"></div>
<div class="t" style="left:1692.00px;top:1156px;font-size:23.25px;color:#3a3a3a;transform:scaleX(0.9136);">65.65.255</div>
<div class="t" style="left:1800.73px;top:1156px;font-size:23.25px;color:#3a3a3a;transform:scaleX(0.9699);">(Katalog)</div>
<div class="r" style="left:1920px;top:1148.6px;width:255.5px;height:36.9px;overflow:hidden">
<div class="t" style="left:3.00px;top:8px;font-size:23.25px;color:#737880;transform:scaleX(0.9954);">Universität</div>
<div class="t" style="left:122.00px;top:8px;font-size:23.25px;color:#737880;transform:scaleX(0.8385);">&gt;</div>
<div class="t" style="left:143.42px;top:8px;font-size:23.25px;color:#737880;transform:scaleX(0.9829);">Biologie</div>
<div class="t" style="left:232.22px;top:8px;font-size:23.25px;color:#737880;transform:scaleX(0.9817);">(Bio-Zentrum)</div>
</div>
<svg class="r" style="left:156px;top:710.3px" width="9" height="16.4" viewBox="0 0 9 16.4"><path d="M0 0 L8.8 8.2 L0 16.4 Z" fill="#5a5a5a"/></svg>
<div class="r" style="left:964.1px;top:725px;width:2.8px;height:2.9px;background:#555;"></div>
<div class="r" style="left:969.4px;top:725px;width:2.8px;height:2.9px;background:#555;"></div>
<div class="r" style="left:974.6px;top:725px;width:2.8px;height:2.9px;background:#555;"></div>
<svg class="r" style="left:1434.1px;top:715.4px" width="14.6" height="8.6" viewBox="0 0 14.6 8.6"><path d="M0 0 L14.6 0 L7.3 8.6 Z" fill="#666"/></svg>
<div class="r" style="left:766.7px;top:1276.6px;width:223.3px;height:49.4px;background:#fff;border:1.3px solid #c6c6c6;box-sizing:border-box;"></div>
<div class="t" style="left:774.80px;top:1291px;font-size:23.25px;color:#1e1e1e;transform:scaleX(0.9020);">95</div>
<div class="r" style="left:1464px;top:1277px;width:184px;height:49.6px;background:#fff;border:1.3px solid #c6c6c6;box-sizing:border-box;overflow:hidden"></div>
<div class="r" style="left:1466px;top:1279px;width:174px;height:45px;overflow:hidden">
<div class="t" style="left:6.50px;top:12px;font-size:23.25px;color:#1e1e1e;transform:scaleX(0.9762);">Gesamtlänge: 4187</div>
</div>
<div class="r" style="left:183.6px;top:1338.6px;width:823.4px;height:17.9px;background:#b8b8b8;"></div>
<div class="r" style="left:2184.9px;top:1161.4px;width:17.5px;height:134.3px;background:#b8b8b8;"></div>
<div class="r" style="left:1599px;top:1424px;width:205px;height:41px;background:#3f3f3f;"></div>
<div class="r" style="left:1824px;top:1424px;width:205px;height:41px;background:#7a7a7a;"></div>
<div class="r" style="left:2049.5px;top:1424px;width:205px;height:41px;background:#e8473f;"></div>
<div class="t" style="left:1644.00px;top:1433px;font-size:24.00px;color:#ffffff;transform:scaleX(0.9716);">Abbrechen</div>
<div class="r" style="left:1644.5px;top:1455.5px;width:14.5px;height:1.3px;background:#ffffff;"></div>
<div class="t" style="left:1856.51px;top:1433px;font-size:24.00px;color:#a6a6a6;transform:scaleX(0.9891);">Übernehmen</div>
<div class="r" style="left:1858px;top:1455.5px;width:16px;height:1.3px;background:#a6a6a6;"></div>
<div class="t" style="left:2137.40px;top:1433px;font-size:24.00px;color:#ffffff;transform:scaleX(0.9226);">Ok</div>
<div class="r" style="left:2137.5px;top:1455.5px;width:17px;height:1.3px;background:#ffffff;"></div>
<div class="r" style="left:312px;top:634px;width:522px;height:443px;background:#fefefe;border:1.3px solid #a0a0a0;box-sizing:border-box;box-shadow:3px 3px 4px rgba(0,0,0,0.28)"></div>
<div class="r" style="left:373.3px;top:690.8px;width:449px;height:1.5px;background:#dcdcdc;"></div>
<div class="r" style="left:373.3px;top:748.3px;width:449px;height:1.5px;background:#dcdcdc;"></div>
<div class="r" style="left:373.3px;top:1018.6999999999999px;width:449px;height:1.5px;background:#dcdcdc;"></div>
<div class="r" style="left:315px;top:804.3px;width:516.5px;height:52.7px;background:#cce4f7;border:2px solid #90c0ec;box-sizing:border-box;"></div>
<div class="r" style="left:324.1px;top:760.5px;width:32.6px;height:32.6px;border-radius:50%;background:#3f3f3f"></div>
<div class="r" style="left:331.1px;top:775.2px;width:18.5px;height:3.2px;background:#fff"></div>
<div class="t" style="left:380.50px;top:654px;font-size:23.25px;color:#323232;transform:scaleX(1.0134);">Anzeigen</div>
<div class="t" style="left:379.47px;top:711px;font-size:23.25px;color:#323232;transform:scaleX(1.0343);">Etiketten drucken</div>
<div class="t" style="left:380.21px;top:769px;font-size:23.25px;color:#323232;transform:scaleX(0.9851);">Löschen</div>
<div class="t" style="left:380.40px;top:822px;font-size:23.25px;color:#323232;transform:scaleX(1.0360);">Ändern</div>
<div class="t" style="left:380.30px;top:875px;font-size:23.25px;color:#323232;transform:scaleX(1.0039);">Kabel auflegen ...</div>
<div class="t" style="left:380.50px;top:929px;font-size:23.25px;color:#323232;transform:scaleX(0.9935);">Austauschen...</div>
<div class="t" style="left:379.50px;top:981px;font-size:23.25px;color:#323232;transform:scaleX(1.0014);">Externe Tools</div>
<div class="t" style="left:380.50px;top:1039px;font-size:23.25px;color:#a0a0a0;transform:scaleX(1.0462);">Wert für Spalte ändern &quot;Definition&quot;...</div>
<svg class="r" style="left:808.7px;top:983px" width="8.5" height="15.5" viewBox="0 0 8.5 15.5"><path d="M0 0 L8.5 7.75 L0 15.5 Z" fill="#333"/></svg>
</body></html>
